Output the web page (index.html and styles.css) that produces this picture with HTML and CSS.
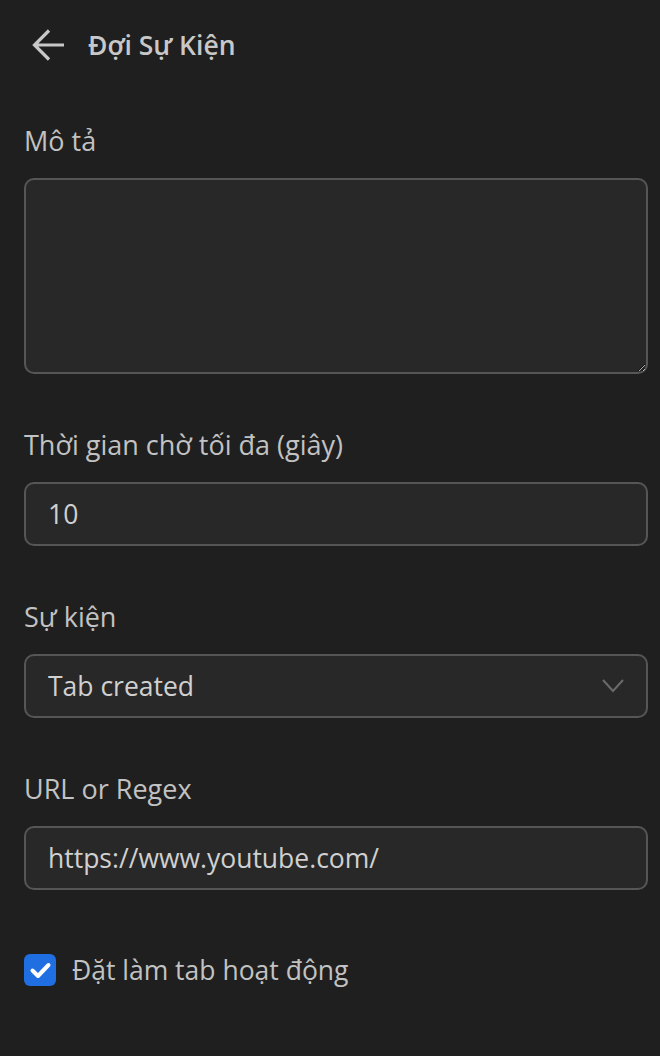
FILE: index.html
```html
<!DOCTYPE html>
<html lang="vi">
<head>
<meta charset="utf-8">
<link rel="stylesheet" href="styles.css">
</head>
<body>
<div class="page">
  <header class="header">
    <svg class="back" viewBox="0 0 32 32" width="32" height="32"><path d="M32 16H2M17 1.5L2.5 16L17 30.5" fill="none" stroke="#c8c8c8" stroke-width="3.2" stroke-linecap="butt" stroke-linejoin="miter"/></svg>
    <h1 class="title">Đợi Sự Kiện</h1>
  </header>
  <main class="form">
    <div class="field">
      <label class="label">Mô tả</label>
      <textarea class="textarea"></textarea>
    </div>
    <div class="field">
      <label class="label">Thời gian chờ tối đa (giây)</label>
      <div class="input">10</div>
    </div>
    <div class="field">
      <label class="label">Sự kiện</label>
      <div class="input select"><span>Tab created</span><svg class="chev" viewBox="0 0 22 14" width="22" height="14"><path d="M1 1l10 11L21 1" fill="none" stroke="#6a6a6a" stroke-width="2"/></svg></div>
    </div>
    <div class="field">
      <label class="label">URL or Regex</label>
      <div class="input">https://www.youtube.com/</div>
    </div>
    <div class="check">
      <span class="box"><svg viewBox="0 0 32 32" width="32" height="32"><path d="M8.5 16.5l5.5 5.5L24.5 11" fill="none" stroke="#fff" stroke-width="4" stroke-linecap="round" stroke-linejoin="round"/></svg></span>
      <span class="check-text">Đặt làm tab hoạt động</span>
    </div>
  </main>
</div>
</body>
</html>
```
FILE: styles.css
```css
html, body {
  margin: 0;
  padding: 0;
  background: #1f1f1f;
}
body {
  font-family: "Open Sans", "Noto Sans", sans-serif;
  color: #c4c4c4;
}
.page {
  width: 660px;
  height: 1056px;
  box-sizing: border-box;
}
.header {
  height: 90px;
  display: flex;
  align-items: center;
  padding-left: 32px;
  gap: 24px;
}
.back {
  display: block;
}
.title {
  margin: 0;
  font-size: 26.5px;
  font-weight: 600;
  color: #c8c8c8;
  line-height: 32px;
}
.form {
  padding: 35px 12px 0 24px;
  display: flex;
  flex-direction: column;
  gap: 55px;
}
.field {
  display: flex;
  flex-direction: column;
  gap: 21px;
}
.label {
  font-size: 27px;
  line-height: 32px;
  color: #c2c2c2;
}
.textarea {
  color-scheme: dark;
  box-sizing: border-box;
  height: 196px;
  width: 100%;
  margin: 0;
  background: #282828;
  border: 2px solid #565656;
  border-radius: 10px;
  resize: vertical;
  outline: none;
  font-family: inherit;
  font-size: 26.5px;
  color: #d0d0d0;
}
.input {
  box-sizing: border-box;
  height: 64px;
  display: flex;
  align-items: center;
  padding: 0 22px;
  background: #282828;
  border: 2px solid #565656;
  border-radius: 10px;
  font-size: 26.5px;
  color: #d0d0d0;
}
.select {
  justify-content: space-between;
}
.chev {
  display: block;
}
.check {
  margin-top: 9px;
  display: flex;
  align-items: center;
  gap: 16px;
}
.box {
  width: 32px;
  height: 32px;
  border-radius: 6px;
  background: #1f6fe3;
  display: block;
}
.box svg {
  display: block;
}
.check-text {
  font-size: 26.5px;
  line-height: 32px;
  color: #c2c2c2;
}
```
